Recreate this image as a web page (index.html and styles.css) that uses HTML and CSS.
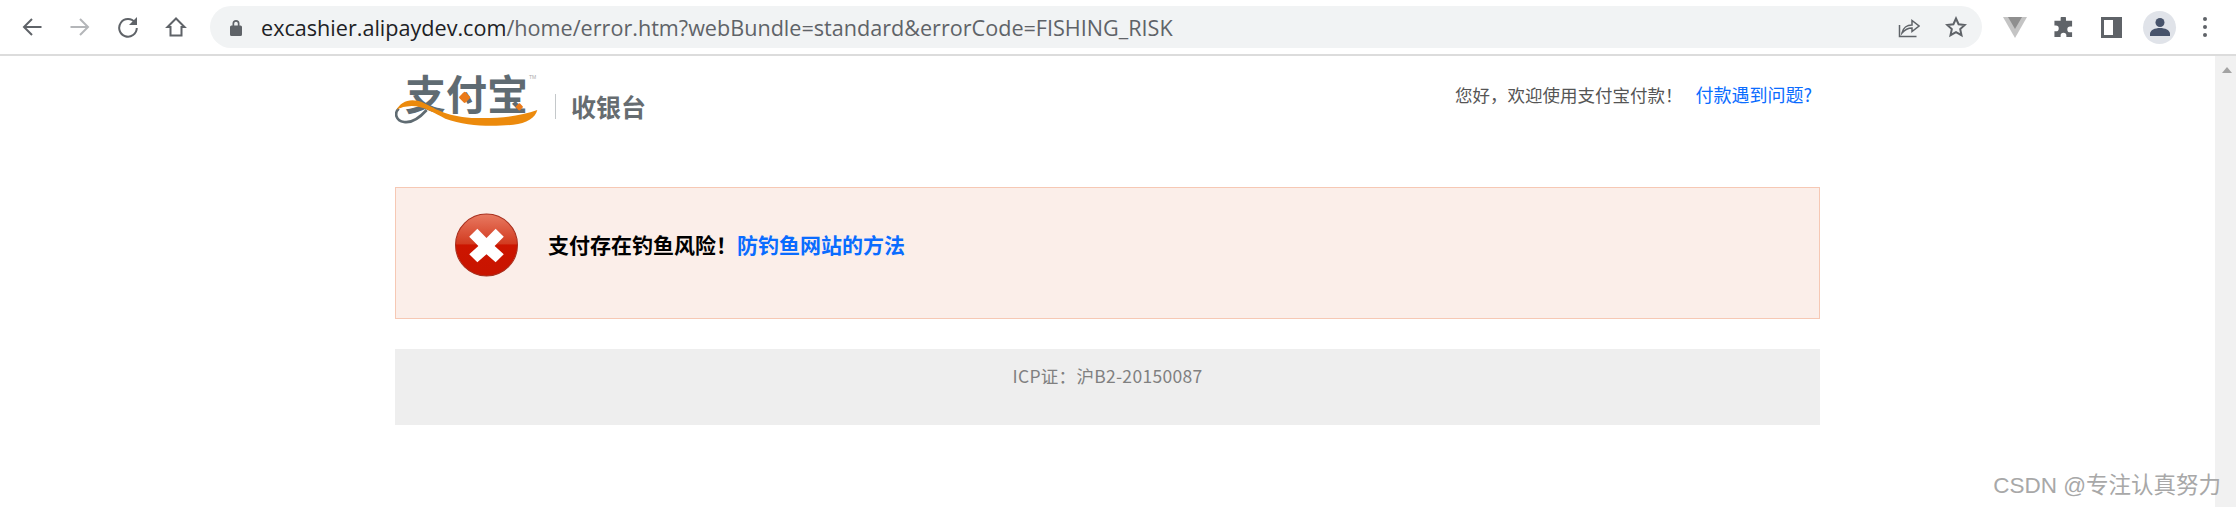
FILE: index.html
```html
<!DOCTYPE html>
<html lang="en">
<head>
  <meta charset="UTF-8" />
  <title>支付宝 - 收银台</title>
  <link rel="stylesheet" href="styles.css">
</head>
<body>
  <!-- Browser toolbar -->
  <div class="toolbar">
    <div class="nav-icons">
      <svg class="icon" viewBox="0 0 22 22"><path d="M20.500 11H3M11 3l-8 8 8 8" /></svg>
      <svg class="icon icon-off" viewBox="0 0 22 22"><path d="M1.500 11H19M11 3l8 8-8 8" /></svg>
      <svg class="icon" viewBox="0 0 22 22"><path d="M18 6.500A8.800 8.800 0 1 0 19.800 12" /><path class="solid" d="M20 1v8h-8z" /></svg>
      <svg class="icon" viewBox="0 0 22 22"><path d="M11 2.500L2.500 11h3v8.500h11V11h3z" /></svg>
    </div>
    <div class="omnibox">
      <svg class="lock" viewBox="0 0 12 17"><path d="M2.500 6.500V4.500a3.500 3.500 0 0 1 7 0v2h1a1.500 1.500 0 0 1 1.500 1.500v7.500a1.500 1.500 0 0 1-1.500 1.500h-9A1.500 1.500 0 0 1 0 15.500V8a1.500 1.500 0 0 1 1.500-1.500zm1.700 0h3.600V4.500a1.800 1.800 0 0 0-3.600 0z" /></svg>
      <span class="url"><span class="url-host">excashier.alipaydev.com</span>/home/error.htm?webBundle=standard&amp;errorCode=FISHING_RISK</span>
      <div class="omni-actions">
        <svg class="icon icon-thin" viewBox="0 0 22 22"><path d="M1.500 9v11.500h17M4 17c1-5 5-8 10-8V4.500L21 10l-7 5.500V12c-4 0-7 1.500-10 5z" /></svg>
        <svg class="icon" viewBox="0 0 22 22"><path d="M11 2.500l2.600 5.700 6.200.7-4.600 4.200 1.300 6.100-5.500-3.100-5.500 3.100 1.300-6.100-4.600-4.200 6.200-.7z" /></svg>
      </div>
    </div>
    <div class="ext-icons">
      <svg class="ext-vue" viewBox="0 0 24 21"><path class="vue-outer" d="M0 0h24L12 21z" /><path class="vue-inner" d="M5 0h14l-7 12z" /></svg>
      <svg class="ext-puzzle" viewBox="0 0 22 22"><path d="M8 1.500a2.800 2.800 0 0 1 5.600 0V4H20v6h-2a3 3 0 0 0 0 6h2v5h-6v-1.500a3 3 0 0 0-6 0V21H1.500v-6H3a3 3 0 0 0 0-6H1.500V4H8z" /></svg>
      <div class="ext-panel"><span></span></div>
      <div class="avatar">
        <svg viewBox="0 0 20 20"><circle cx="10" cy="5.500" r="4.500" /><path d="M0 17c0-4 5-6 10-6s10 2 10 6v2H0z" /></svg>
      </div>
      <div class="menu-dots"><i></i><i></i><i></i></div>
    </div>
  </div>

  <div class="viewport">
    <div class="page">
      <div class="container">
        <div class="header">
          <div class="logo">
            <span class="logo-mark">支付宝</span>
            <span class="logo-tm">TM</span>
            <svg class="logo-swoosh" viewBox="45 30 450 180">
              <path class="swoosh-grey" d="M140 150C120 172 95 190 72 186C48 182 42 160 56 146" />
              <path class="swoosh-orange" d="M50 150C62 124 92 112 130 128C170 148 205 172 290 174C360 176 420 168 472 150C466 174 440 190 400 194C340 200 260 200 196 176C165 160 130 138 95 138C75 139 62 142 50 150z" />
              <rect class="swoosh-dot" x="241" y="99" width="26" height="26" rx="4" transform="rotate(45 254 112)" />
              <rect class="swoosh-dot" x="410" y="132" width="17" height="17" rx="3" transform="rotate(45 418 140)" />
            </svg>
          </div>
          <span class="logo-sep"></span>
          <span class="logo-sub">收银台</span>
          <div class="welcome">您好&#xFF0C;欢迎使用支付宝付款&#xFF01;<a class="link welcome-link" href="#">付款遇到问题?</a></div>
        </div>

        <div class="notice">
          <svg class="notice-icon" viewBox="0 0 62 64">
            <defs>
              <linearGradient id="gloss" x1="0" y1="0" x2="0" y2="1">
                <stop offset="0" stop-color="#e87a62" />
                <stop offset="0.48" stop-color="#d23b20" />
                <stop offset="0.5" stop-color="#cc1500" />
                <stop offset="1" stop-color="#c81400" />
              </linearGradient>
            </defs>
            <circle cx="31" cy="32" r="30.500" fill="url(#gloss)" stroke="#a8301f" stroke-width="1" />
            <path class="cross" d="M22 16l9 9 9-9 8 8-9 9 9 8-8 8-9-8-9 8-8-8 9-8-9-9z" />
          </svg>
          <p class="notice-text">支付存在钓鱼风险&#xFF01;<a class="link" href="#">防钓鱼网站的方法</a></p>
        </div>

        <div class="footer">ICP证&#xFF1A;沪B2-20150087</div>
      </div>
    </div>
    <div class="scrollbar"><span class="scroll-up"></span></div>
  </div>

  <div class="watermark">CSDN @专注认真努力</div>
</body>
</html>
```

FILE: styles.css
```css
body {
  margin: 0;
  height: 507px;
  overflow: hidden;
  position: relative;
  background-color: #fff;
  font-family: "Liberation Sans", "Noto Sans CJK SC", sans-serif;
}

a {
  text-decoration: none;
}

/* toolbar */
.toolbar {
  display: flex;
  align-items: center;
  height: 54px;
  border-bottom: 2px solid #dcdcdc;
}

.icon {
  width: 22px;
  height: 22px;
  fill: none;
  stroke: #5f6368;
  stroke-width: 2;
}

.icon .solid {
  fill: #5f6368;
  stroke: none;
}

.icon-off {
  stroke: #b4b6b9;
}

.icon-thin {
  stroke-width: 1.500;
}

.nav-icons {
  display: flex;
  gap: 26px;
  width: 210px;
  padding-left: 21px;
  box-sizing: border-box;
}

.omnibox {
  display: flex;
  align-items: center;
  width: 1772px;
  height: 42px;
  padding: 0 15px 0 20px;
  box-sizing: border-box;
  background-color: #f1f3f4;
  border-radius: 21px;
}

.lock {
  width: 12px;
  height: 17px;
  fill: #5f6368;
  margin-right: 19px;
}

.url {
  font-family: "Open Sans", sans-serif;
  font-size: 21.600px;
  color: #5f6368;
  white-space: nowrap;
}

.url-host {
  color: #202124;
}

.omni-actions {
  display: flex;
  gap: 25px;
  margin-left: auto;
}

.ext-icons {
  display: flex;
  align-items: center;
  padding-left: 21px;
}

.ext-vue {
  width: 24px;
  height: 21px;
  margin-right: 26px;
}

.vue-outer {
  fill: #c4c4c4;
}

.vue-inner {
  fill: #8f8f8f;
}

.ext-puzzle {
  width: 21px;
  height: 21px;
  fill: #5f6368;
  margin-right: 27px;
}

.ext-panel {
  width: 21px;
  height: 21px;
  box-sizing: border-box;
  border: 3px solid #5f6368;
  background-color: #5f6368;
  margin-right: 21px;
}

.ext-panel span {
  display: block;
  width: 9px;
  height: 15px;
  background-color: #fff;
}

.avatar {
  display: flex;
  align-items: center;
  justify-content: center;
  width: 33px;
  height: 33px;
  border-radius: 50%;
  background-color: #e0e3e9;
  margin-right: 27px;
}

.avatar svg {
  width: 20px;
  height: 20px;
  fill: #47536b;
}

.menu-dots {
  display: flex;
  flex-direction: column;
  gap: 4px;
}

.menu-dots i {
  display: block;
  width: 4px;
  height: 4px;
  border-radius: 50%;
  background-color: #5f6368;
}

/* page area */
.viewport {
  display: flex;
  height: 451px;
}

.page {
  flex: 1;
}

.container {
  width: 1425px;
  margin: 0 auto;
}

.scrollbar {
  width: 21px;
  background-color: #f1f1f1;
}

.scroll-up {
  display: block;
  width: 0;
  margin: 11px 0 0 7px;
  border-left: 5px solid transparent;
  border-right: 5px solid transparent;
  border-bottom: 6px solid #a3a3a3;
}

.header {
  display: flex;
  height: 131px;
  color: #5f6b72;
}

.logo {
  position: relative;
  width: 150px;
  height: 70px;
}

.logo-mark {
  display: block;
  padding: 11px 0 0 10px;
  font-family: "Noto Sans CJK SC", sans-serif;
  font-size: 41px;
  font-weight: 700;
  line-height: 50px;
  white-space: nowrap;
}

.logo-tm {
  position: absolute;
  left: 134px;
  top: 18px;
  font-size: 5px;
  color: #aaa;
}

.logo-swoosh {
  position: absolute;
  left: 0;
  top: 14px;
  width: 150px;
  height: 60px;
}

.swoosh-grey {
  fill: none;
  stroke: #5f6b72;
  stroke-width: 8;
}

.swoosh-orange {
  fill: #ec8a0c;
}

.swoosh-dot {
  fill: #ea7a1a;
}

.logo-sep {
  width: 1px;
  height: 25px;
  margin: 38px 15px 0 10px;
  background-color: #c4c8ca;
}

.logo-sub {
  padding-top: 32px;
  font-family: "Noto Sans CJK SC", sans-serif;
  font-size: 25px;
  font-weight: 700;
  line-height: 36px;
  color: #666c70;
}

.welcome {
  margin-left: auto;
  padding: 25px 8px 0 0;
  font-family: "Noto Sans CJK SC", sans-serif;
  font-size: 17.500px;
  line-height: 26px;
  color: #555;
}

.link {
  color: #0a6cff;
}

.welcome-link {
  margin-left: 13px;
  font-size: 18px;
}

.notice {
  display: flex;
  align-items: flex-start;
  height: 132px;
  padding: 24px 0 0 59px;
  box-sizing: border-box;
  border: 1px solid #f6c8b4;
  background-color: #fbeee9;
}

.notice-icon {
  width: 63px;
  height: 66px;
  flex-shrink: 0;
}

.cross {
  fill: #fff;
}

.notice-text {
  margin: 17px 0 0 30px;
  font-family: "Noto Sans CJK SC", sans-serif;
  font-size: 21px;
  font-weight: 700;
  line-height: 30px;
  color: #000;
}

.footer {
  height: 76px;
  margin-top: 30px;
  padding-top: 15px;
  box-sizing: border-box;
  background-color: #eee;
  font-family: "Noto Sans CJK SC", sans-serif;
  font-size: 17.500px;
  letter-spacing: 0.3px;
  line-height: 24px;
  text-align: center;
  color: #808080;
}

/* watermark sits over the page and the scrollbar */
.watermark {
  position: absolute;
  right: 15px;
  bottom: 7px;
  font-size: 22.500px;
  line-height: 28px;
  color: #a8a8a8;
  white-space: nowrap;
}
```
